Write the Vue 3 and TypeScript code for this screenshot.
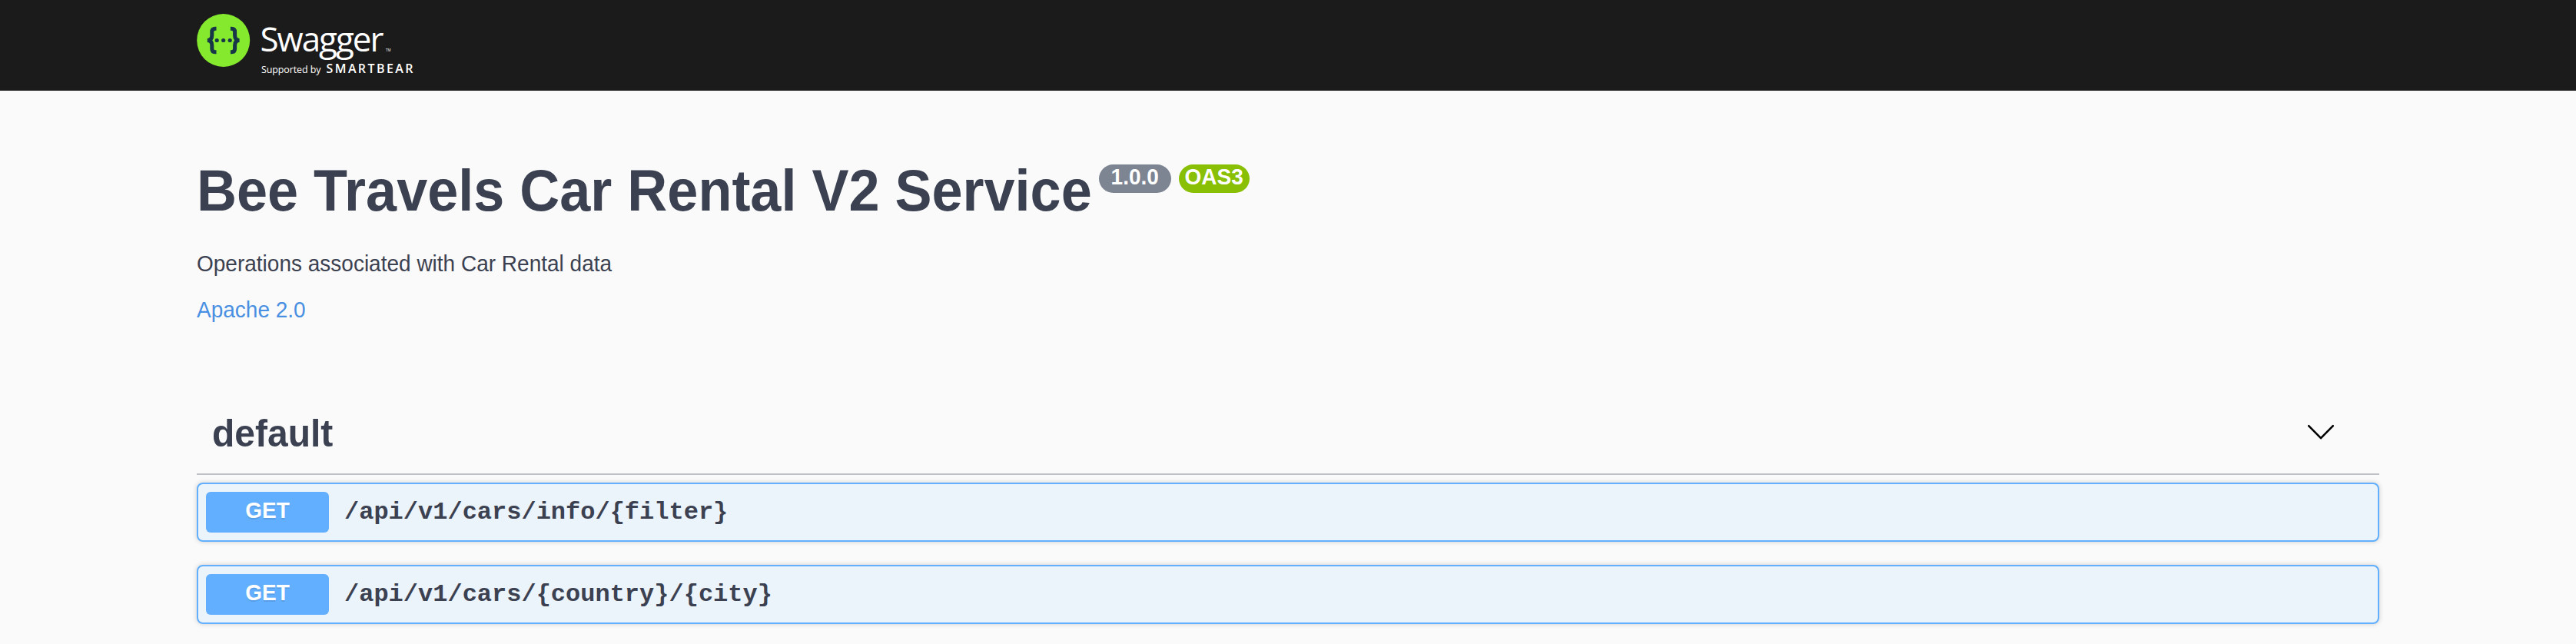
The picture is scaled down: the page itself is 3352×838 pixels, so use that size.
<script setup lang="ts">
interface Operation {
  method: string
  path: string
}

const title = 'Bee Travels Car Rental V2 Service'
const version = '1.0.0'
const operations: Operation[] = [
  { method: 'GET', path: '/api/v1/cars/info/{filter}' },
  { method: 'GET', path: '/api/v1/cars/{country}/{city}' },
]
</script>

<template>
  <div class="page">
    <header class="topbar">
      <svg class="logo" width="300" height="117" viewBox="256 0 300 117" role="img" aria-label="Swagger">
        <circle cx="290.7" cy="52.5" r="34.5" fill="#85ea2d" />
        <g fill="none" stroke="#173647" stroke-width="5">
          <path d="M281.5 37.2h-1.5q-4.2 0-4.2 4.2v4.6q0 6.5-6 6.5q6 0 6 6.5v4.6q0 4.2 4.2 4.2h1.5" />
          <path d="M299.9 37.2h1.5q4.2 0 4.2 4.2v4.6q0 6.5 6 6.5q-6 0-6 6.5v4.6q0 4.2-4.2 4.2h-1.5" />
        </g>
        <g fill="#173647">
          <circle cx="282.2" cy="52.5" r="2.6" />
          <circle cx="290.7" cy="52.5" r="2.6" />
          <circle cx="299.2" cy="52.5" r="2.6" />
        </g>
        <g fill="#fff">
          <text class="word" x="338.5" y="66.6" textLength="161">Swagger</text>
          <text class="tm" x="502" y="66.5">TM</text>
          <text class="by" x="340" y="95" textLength="77.5">Supported by</text>
          <text class="bear" x="424.5" y="94.5" textLength="113">SMARTBEAR</text>
        </g>
      </svg>
    </header>

    <main class="wrapper">
      <section class="info">
        <h1 class="title">
          <span class="stretch">{{ title }}</span>
          <span class="badges">
            <span class="badge version"><span class="stretch">{{ version }}</span></span>
            <span class="badge oas"><span class="stretch">OAS3</span></span>
          </span>
        </h1>
        <p class="description"><span class="stretch">Operations associated with Car Rental data</span></p>
        <a class="license"><span class="stretch">Apache 2.0</span></a>
      </section>

      <section>
        <h3 class="tag">
          <span class="stretch">default</span>
          <svg class="chevron" width="40" height="40" viewBox="0 0 40 40">
            <path d="M4.2 12.2L20 28.2L35.8 12.2" fill="none" stroke="#000" stroke-width="2.6" stroke-linecap="round" stroke-linejoin="round" />
          </svg>
        </h3>
        <div v-for="op in operations" :key="op.path" class="operation">
          <span class="method"><span class="stretch">{{ op.method }}</span></span>
          <span class="path">{{ op.path }}</span>
        </div>
      </section>
    </main>
  </div>
</template>

<style>
body {
  background: #fafafa;
}
</style>

<style scoped>
.page {
  box-sizing: border-box;
  height: 838px;
  overflow: hidden;
  background: #fafafa;
  color: #3b4151;
  font-family: "Liberation Sans", Arial, sans-serif;
}

.topbar {
  height: 118px;
  padding-left: 256px;
  background: #1b1b1b;
}

.logo {
  display: block;
}

.word {
  font: 400 44px "Open Sans", sans-serif;
}

.tm {
  font: 400 4.5px "Open Sans", sans-serif;
}

.by {
  font: 400 12.5px "Open Sans", sans-serif;
}

.bear {
  font: 600 16px "Open Sans", sans-serif;
}

.wrapper {
  width: 2840px;
  margin: 0 auto;
}

.stretch {
  display: inline-block;
  transform: scaleY(1.05);
  transform-origin: 50% 81%;
}

.info {
  display: flex;
  flex-direction: column;
  height: 400px;
  padding-top: 90px;
  box-sizing: border-box;
}

.title {
  display: flex;
  height: 84px;
  margin: 0;
  font-size: 72px;
  line-height: 82px;
  white-space: nowrap;
}

.badges {
  display: flex;
  gap: 10px;
  margin: 6px 0 0 9px;
}

.badge {
  display: flex;
  justify-content: center;
  height: 37px;
  border-radius: 19px;
  color: #fff;
  font-size: 28px;
  line-height: 34px;
}

.version {
  width: 94px;
  background: #7d8492;
}

.oas {
  width: 92px;
  background: #89bf04;
}

.description {
  margin: 36px 0 0;
  font-size: 28px;
  line-height: 32px;
}

.license {
  margin-top: 28px;
  color: #4990e2;
  font-size: 28px;
  line-height: 32px;
}

.tag {
  display: flex;
  align-items: center;
  justify-content: space-between;
  box-sizing: border-box;
  height: 100px;
  margin: 0 0 10px;
  padding: 0 56px 4px 20px;
  border-bottom: 2px solid #bfc1c7;
  font-size: 48px;
  line-height: 56px;
}

.chevron {
  margin-bottom: 6px;
}

.operation {
  display: flex;
  align-items: center;
  box-sizing: border-box;
  height: 77px;
  margin-bottom: 30px;
  padding: 0 10px;
  border: 2px solid #61affe;
  border-radius: 8px;
  background: #ebf3fb;
  box-shadow: 0 0 6px rgba(0, 0, 0, 0.19);
}

.method {
  width: 160px;
  height: 53px;
  border-radius: 6px;
  background: #61affe;
  color: #fff;
  font-size: 28px;
  font-weight: 700;
  line-height: 49px;
  text-align: center;
  text-shadow: 0 2px 0 rgba(0, 0, 0, 0.1);
}

.path {
  padding-left: 20px;
  font: 700 32px/36px "Liberation Mono", "Courier New", monospace;
}
</style>
